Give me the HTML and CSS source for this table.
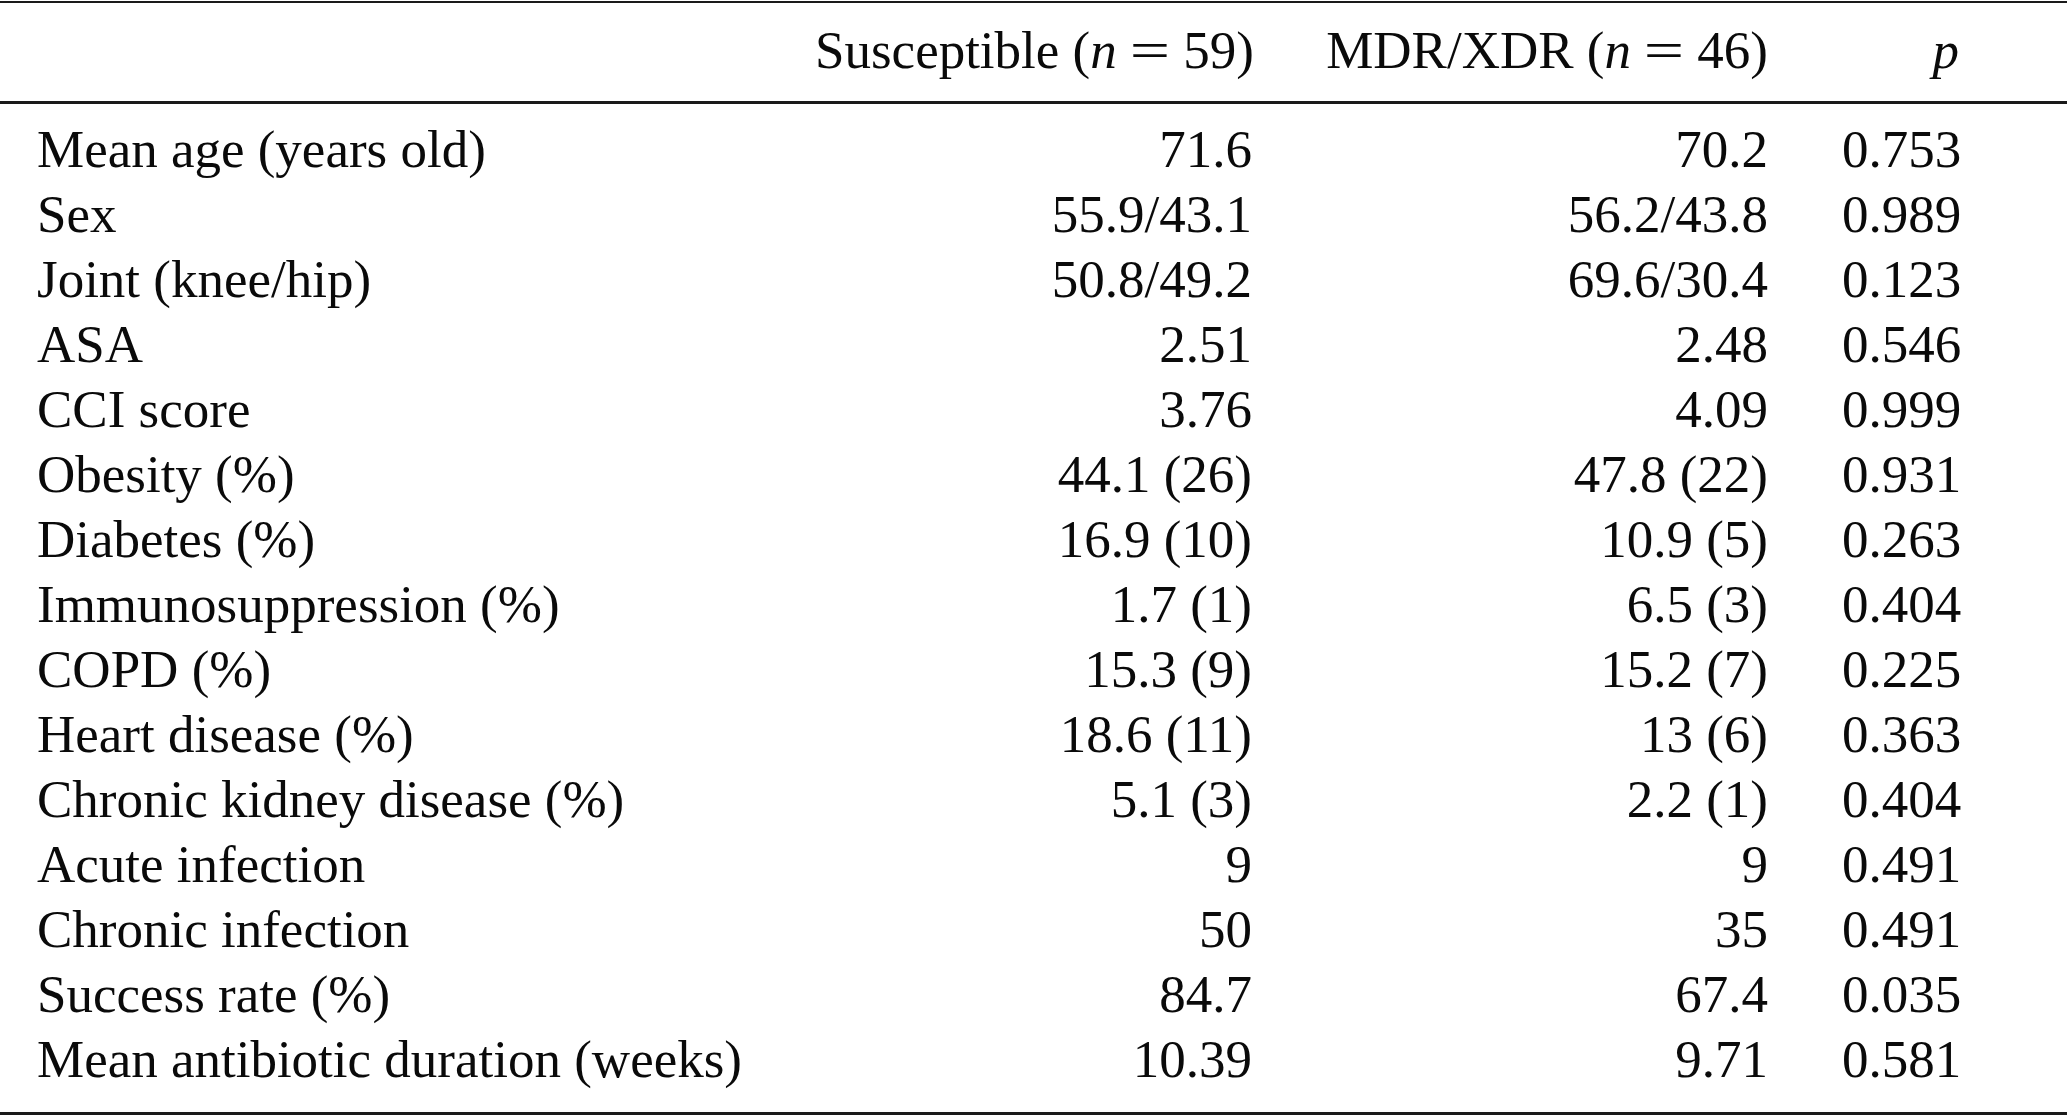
FILE: index.html
```html
<!DOCTYPE html>
<html lang="en">
<head>
<meta charset="utf-8">
<title>Table</title>
<link rel="stylesheet" href="styles.css">
</head>
<body>
<table class="tbl">
  <colgroup>
    <col class="c-label">
    <col class="c-sus">
    <col class="c-mdr">
    <col class="c-p">
  </colgroup>
  <thead>
    <tr>
      <th class="label"></th>
      <th class="num">Susceptible (<i>n</i> <span class="eq">=</span> 59)</th>
      <th class="num">MDR/XDR (<i>n</i> <span class="eq">=</span> 46)</th>
      <th class="num pcol"><i>p</i></th>
    </tr>
  </thead>
  <tbody>
    <tr class="first"><td class="label">Mean age (years old)</td><td class="num">71.6</td><td class="num">70.2</td><td class="num pcol">0.753</td></tr>
    <tr><td class="label">Sex</td><td class="num">55.9/43.1</td><td class="num">56.2/43.8</td><td class="num pcol">0.989</td></tr>
    <tr><td class="label">Joint (knee/hip)</td><td class="num">50.8/49.2</td><td class="num">69.6/30.4</td><td class="num pcol">0.123</td></tr>
    <tr><td class="label">ASA</td><td class="num">2.51</td><td class="num">2.48</td><td class="num pcol">0.546</td></tr>
    <tr><td class="label">CCI score</td><td class="num">3.76</td><td class="num">4.09</td><td class="num pcol">0.999</td></tr>
    <tr><td class="label">Obesity (%)</td><td class="num">44.1 (26)</td><td class="num">47.8 (22)</td><td class="num pcol">0.931</td></tr>
    <tr><td class="label">Diabetes (%)</td><td class="num">16.9 (10)</td><td class="num">10.9 (5)</td><td class="num pcol">0.263</td></tr>
    <tr><td class="label">Immunosuppression (%)</td><td class="num">1.7 (1)</td><td class="num">6.5 (3)</td><td class="num pcol">0.404</td></tr>
    <tr><td class="label">COPD (%)</td><td class="num">15.3 (9)</td><td class="num">15.2 (7)</td><td class="num pcol">0.225</td></tr>
    <tr><td class="label">Heart disease (%)</td><td class="num">18.6 (11)</td><td class="num">13 (6)</td><td class="num pcol">0.363</td></tr>
    <tr><td class="label">Chronic kidney disease (%)</td><td class="num">5.1 (3)</td><td class="num">2.2 (1)</td><td class="num pcol">0.404</td></tr>
    <tr><td class="label">Acute infection</td><td class="num">9</td><td class="num">9</td><td class="num pcol">0.491</td></tr>
    <tr><td class="label">Chronic infection</td><td class="num">50</td><td class="num">35</td><td class="num pcol">0.491</td></tr>
    <tr><td class="label">Success rate (%)</td><td class="num">84.7</td><td class="num">67.4</td><td class="num pcol">0.035</td></tr>
    <tr class="last"><td class="label">Mean antibiotic duration (weeks)</td><td class="num">10.39</td><td class="num">9.71</td><td class="num pcol">0.581</td></tr>
  </tbody>
</table>
</body>
</html>
```

FILE: styles.css
```css
html, body {
  margin: 0;
  padding: 0;
  background: #ffffff;
}

body {
  font-family: "Liberation Serif", "Times New Roman", serif;
  font-size: 53px;
  color: #0a0a0a;
}

.tbl {
  width: 2067px;
  border-collapse: collapse;
  table-layout: fixed;
  border-top: 2px solid #1a1a1a;
  border-bottom: 3px solid #1a1a1a;
  margin-top: 1px;
}

.c-label { width: 778px; }
.c-sus { width: 511px; }
.c-mdr { width: 516px; }
.c-p { width: 262px; }

.tbl th,
.tbl td {
  padding: 0 37px;
  line-height: 65px;
  font-weight: normal;
  white-space: nowrap;
}

.tbl thead th {
  height: 94px;
  padding-top: 0;
  padding-bottom: 4px;
  border-bottom: 3px solid #1a1a1a;
  vertical-align: middle;
}

.eq {
  display: inline-block;
  margin: 0 5px;
  transform: scaleX(1.35);
}

.tbl .label { text-align: left; }
.tbl .num { text-align: right; }
.tbl .pcol { padding-right: 108px; }

.tbl tr.first td { padding-top: 13px; }
.tbl tr.last td { padding-bottom: 20px; }
```
